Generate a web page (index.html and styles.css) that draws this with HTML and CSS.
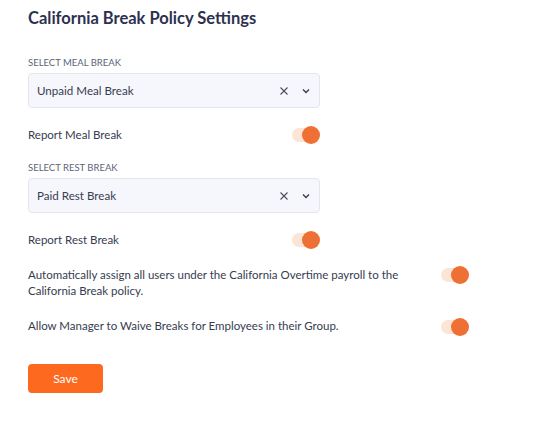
FILE: index.html
```html
<!DOCTYPE html>
<html lang="en">
<head>
    <meta charset="UTF-8">
    <meta name="viewport" content="width=device-width, initial-scale=1.0">
    <title>California Break Policy Settings</title>
    <link rel="stylesheet" href="styles.css">
</head>
<body>
    <div class="page">
        <h1 class="title">California Break Policy Settings</h1>

        <div class="field first">
            <div class="field-label">SELECT MEAL BREAK</div>
            <div class="select">
                <span class="select-value">Unpaid Meal Break</span>
                <span class="select-icons">
                    <svg width="10" height="10" viewBox="0 0 10 10"><path d="M1.5 1.5 L8.5 8.5 M8.5 1.5 L1.5 8.5" stroke="#4a4f60" stroke-width="1.1" fill="none"/></svg>
                    <svg width="10" height="10" viewBox="0 0 10 10"><path d="M2 3.5 L5 6.5 L8 3.5" stroke="#3a3f52" stroke-width="1.4" fill="none"/></svg>
                </span>
            </div>
        </div>

        <div class="row">
            <span class="row-text">Report Meal Break</span>
            <span class="toggle"><span class="track"></span><span class="knob"></span></span>
        </div>

        <div class="field">
            <div class="field-label">SELECT REST BREAK</div>
            <div class="select">
                <span class="select-value">Paid Rest Break</span>
                <span class="select-icons">
                    <svg width="10" height="10" viewBox="0 0 10 10"><path d="M1.5 1.5 L8.5 8.5 M8.5 1.5 L1.5 8.5" stroke="#4a4f60" stroke-width="1.1" fill="none"/></svg>
                    <svg width="10" height="10" viewBox="0 0 10 10"><path d="M2 3.5 L5 6.5 L8 3.5" stroke="#3a3f52" stroke-width="1.4" fill="none"/></svg>
                </span>
            </div>
        </div>

        <div class="row">
            <span class="row-text">Report Rest Break</span>
            <span class="toggle"><span class="track"></span><span class="knob"></span></span>
        </div>

        <div class="row wide">
            <span class="row-text">Automatically assign all users under the California Overtime payroll to the California Break policy.</span>
            <span class="toggle"><span class="track"></span><span class="knob"></span></span>
        </div>

        <div class="row wide last">
            <span class="row-text">Allow Manager to Waive Breaks for Employees in their Group.</span>
            <span class="toggle"><span class="track"></span><span class="knob"></span></span>
        </div>

        <button class="save">Save</button>
    </div>
</body>
</html>
```

FILE: styles.css
```css
body {
    margin: 0;
    background-color: #ffffff;
    font-family: Lato, "Noto Sans", sans-serif;
    color: #363c50;
}
.page {
    padding: 7px 28px;
}
.title {
    margin: 0;
    font-size: 16.5px;
    line-height: 22px;
    font-weight: 700;
    color: #2c3150;
}
.field {
    width: 292px;
    margin-top: 18px;
}
.field.first {
    margin-top: 28px;
}
.field-label {
    font-size: 9.5px;
    line-height: 12px;
    color: #5d6377;
    margin-bottom: 4px;
}
.select {
    height: 35px;
    box-sizing: border-box;
    border: 1px solid #e4e6ef;
    border-radius: 4px;
    background-color: #f6f7fc;
    display: flex;
    align-items: center;
    justify-content: space-between;
    padding: 0 8px 0 8px;
    font-size: 11.6px;
}
.select-icons {
    display: flex;
    align-items: center;
    gap: 12px;
}
.row {
    width: 292px;
    margin-top: 18px;
    display: flex;
    align-items: center;
    justify-content: space-between;
    font-size: 11.5px;
    line-height: 16px;
}
.field + .row {
    margin-top: 18px;
}
.row.wide {
    width: 441px;
    align-items: flex-start;
}
.row.wide .row-text {
    width: 400px;
}
.row.wide .toggle {
    margin-top: -1px;
}
.row.last {
    margin-top: 19px;
}
.row.last .toggle {
    margin-top: 0;
}
.toggle {
    position: relative;
    width: 28px;
    height: 18px;
    flex-shrink: 0;
}
.track {
    position: absolute;
    left: 0;
    top: 2px;
    width: 26px;
    height: 14px;
    border-radius: 7px;
    background-color: #fde5d5;
}
.knob {
    position: absolute;
    right: 0;
    top: 0;
    width: 18px;
    height: 18px;
    border-radius: 50%;
    background-color: #ee7034;
}
.save {
    display: block;
    margin-top: 28px;
    width: 75px;
    height: 29px;
    border: none;
    border-radius: 4px;
    background-color: #fd6a1f;
    color: #ffffff;
    font-family: Lato, "Noto Sans", sans-serif;
    font-size: 12px;
}
```
